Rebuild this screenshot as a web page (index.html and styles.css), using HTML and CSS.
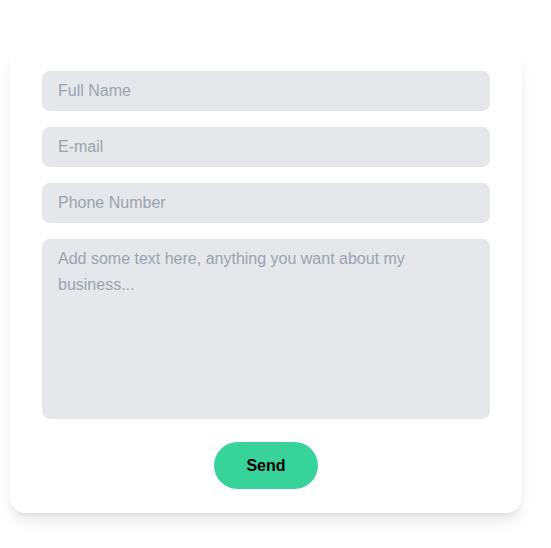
FILE: index.html
```html
<!DOCTYPE html>
<html>
<head>
<meta charset="utf-8">
<link rel="stylesheet" href="styles.css">
</head>
<body>
<form class="card">
  <input class="field" type="text" placeholder="Full Name">
  <input class="field" type="email" placeholder="E-mail">
  <input class="field" type="tel" placeholder="Phone Number">
  <textarea class="field area" placeholder="Add some text here, anything you want about my business..."></textarea>
  <div class="actions">
    <button class="send" type="button">Send</button>
  </div>
</form>
</body>
</html>
```
FILE: styles.css
```css
html, body {
  margin: 0;
  padding: 0;
  background: #ffffff;
}
body {
  padding: 47px 0 35px 10px;
  font-family: "Liberation Sans", Arial, sans-serif;
}
.card {
  box-sizing: border-box;
  width: 512px;
  background: #ffffff;
  border-radius: 16px;
  padding: 24px 32px;
  display: flex;
  flex-direction: column;
  gap: 16px;
  box-shadow: 0 10px 15px -3px rgba(0,0,0,0.1), 0 4px 6px -2px rgba(0,0,0,0.05);
}
.field {
  box-sizing: border-box;
  display: block;
  width: 100%;
  height: 40px;
  margin: 0;
  border: none;
  outline: none;
  border-radius: 8px;
  background: #e5e7eb;
  padding: 8px 16px;
  font-family: "Liberation Sans", Arial, sans-serif;
  font-size: 16px;
  line-height: 24px;
  color: #111827;
}
.field::placeholder {
  color: #9ca3af;
  opacity: 1;
}
.area {
  height: 180px;
  padding-top: 7px;
  line-height: 26px;
  resize: none;
}
.actions {
  display: flex;
  justify-content: center;
  padding-top: 7px;
}
.send {
  width: 104px;
  height: 47px;
  border: none;
  border-radius: 24px;
  background: #38d39a;
  color: #000000;
  font-family: "Liberation Sans", Arial, sans-serif;
  font-weight: 700;
  font-size: 16px;
  cursor: pointer;
}
```
